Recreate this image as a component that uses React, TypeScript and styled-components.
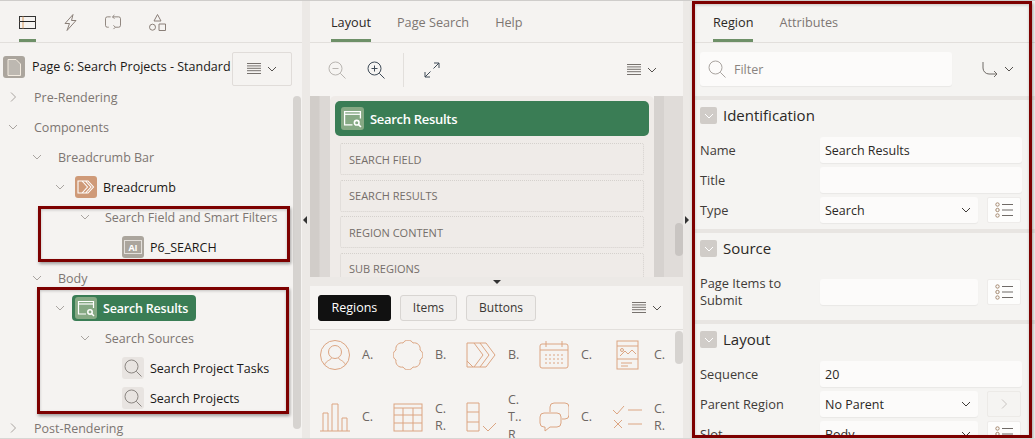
import React from "react";
import styled, { createGlobalStyle } from "styled-components";

const Global = createGlobalStyle`
  html, body { margin: 0; padding: 0; background: #fff; }
  * { box-sizing: border-box; }
`;

const Page = styled.div`
  position: relative;
  width: 1035px;
  height: 439px;
  overflow: hidden;
  display: flex;
  background: #ece9e6;
  border-top: 1px solid #cfcdcb;
  border-bottom: 1px solid #d8d6d4;
  font-family: "Open Sans", "Noto Sans", sans-serif;
  font-size: 12.5px;
  color: #1a1816;
`;
const LeftPanel = styled.section`
  position: relative;
  width: 302px;
  flex: none;
  background: #f5f3f1;
  display: flex;
  flex-direction: column;
  overflow: hidden;
`;
const CenterPanel = styled.section`
  position: relative;
  width: 373px;
  margin-left: 8px;
  flex: none;
  display: flex;
  flex-direction: column;
  overflow: hidden;
  background: #f5f3f1;
`;
const RightPanel = styled.section`
  width: 343px;
  margin-left: 9px;
  flex: none;
  background: #f5f4f2;
  overflow: hidden;
  display: flex;
  flex-direction: column;
`;
const TabBar = styled.div<{ $gap: number; $left: number }>`
  height: 42px;
  flex: none;
  display: flex;
  gap: ${(p) => p.$gap}px;
  padding-left: ${(p) => p.$left}px;
  border-bottom: 1px solid #e2dfdc;
`;
const Tab = styled.div<{ $active?: boolean }>`
  height: 41px;
  display: flex;
  align-items: center;
  padding-top: 4px;
  font-size: 12.7px;
  color: ${(p) => (p.$active ? "#2b2825" : "#7d7672")};
  border-bottom: 3px solid ${(p) => (p.$active ? "#6e9068" : "transparent")};
`;
const IconTab = styled(Tab)<{ $w: number }>`
  width: ${(p) => p.$w}px;
  justify-content: center;
`;
const TitleRow = styled.div`
  height: 37px;
  margin-top: 9px;
  flex: none;
  display: flex;
  align-items: flex-start;
  padding: 4px 10px 0 3px;
`;
const PageBadge = styled.span`
  width: 22px;
  height: 22px;
  flex: none;
  border-radius: 3px;
  background: #aba59d;
  margin-right: 7px;
  display: flex;
  align-items: center;
  justify-content: center;
`;
const TitleText = styled.span`
  flex: 1;
  min-width: 0;
  line-height: 22px;
  white-space: nowrap;
  overflow: hidden;
`;
const MenuBox = styled.div`
  width: 60px;
  height: 34px;
  flex: none;
  margin-top: -4px;
  border: 1px solid #e0dcd9;
  border-radius: 2px;
  display: flex;
  align-items: center;
  justify-content: center;
  gap: 5px;
`;
const Tree = styled.div`
  display: flex;
  flex-direction: column;
  margin-top: -7px;
`;
const Row = styled.div<{ $indent: number; $tall?: boolean }>`
  height: ${(p) => (p.$tall ? 31 : 30)}px;
  padding-bottom: ${(p) => (p.$tall ? 1 : 0)}px;
  display: flex;
  align-items: center;
  padding-left: ${(p) => p.$indent}px;
  white-space: nowrap;
`;
const Twisty = styled.span<{ $gap: number }>`
  width: 20px;
  flex: none;
  margin-right: ${(p) => p.$gap}px;
  display: flex;
  justify-content: center;
  color: #a5a09c;
`;
const Muted = styled.span`
  color: #7d7672;
`;
const NodeIcon = styled.span<{ $bg: string }>`
  width: 22px;
  height: 22px;
  flex: none;
  margin-right: 6px;
  border-radius: 3px;
  background: ${(p) => p.$bg};
  display: flex;
  align-items: center;
  justify-content: center;
`;
const Pill = styled.span`
  height: 26px;
  display: flex;
  align-items: center;
  padding: 0 8px 0 3px;
  border-radius: 4px;
  background: #3a7d55;
  color: #fff;
  font-weight: 600;
  letter-spacing: -0.2px;
`;
const Track = styled.div<{ $left: number; $top: number; $h: number; $c?: string }>`
  position: absolute;
  left: ${(p) => p.$left}px;
  top: ${(p) => p.$top}px;
  width: 8px;
  height: ${(p) => p.$h}px;
  border-radius: 4px;
  background: ${(p) => p.$c ?? "#d6d3d0"};
`;
const Toolbar = styled.div`
  height: 53px;
  flex: none;
  display: flex;
  align-items: center;
  padding: 0 25px 0 18px;
  background: #f6f4f2;
`;
const ToolIcon = styled.span<{ $mr: number }>`
  display: flex;
  margin-right: ${(p) => p.$mr}px;
`;
const ToolSep = styled.span`
  width: 1px;
  height: 34px;
  background: #e2dfdc;
  margin-right: 20px;
`;
const Grow = styled.span`
  flex: 1;
`;
const MenuGlyph = styled.span`
  display: flex;
  align-items: center;
  gap: 5px;
`;
const Canvas = styled.div`
  height: 181px;
  flex: none;
  overflow: hidden;
  padding: 0 29px 0 20px;
  background: linear-gradient(90deg, #d1cdc9 0, #d1cdc9 9px, #dcd8d5 10px, #dcd8d5 20px, transparent 20px),
    linear-gradient(90deg, transparent 344px, #d6d2cf 344px, #d6d2cf 354px, #e0dcd9 354px, #e0dcd9 373px);
`;
const Card = styled.div`
  height: 200px;
  background: #efebe8;
  border-radius: 5px 5px 0 0;
  padding: 5px;
  display: flex;
  flex-direction: column;
`;
const RegionHead = styled.div`
  height: 35px;
  flex: none;
  background: #3a7d55;
  border-radius: 5px;
  color: #fff;
  font-size: 13px;
  font-weight: 600;
  letter-spacing: -0.3px;
  display: flex;
  align-items: center;
  padding-left: 6px;
  margin-bottom: 7px;
`;
const RegionIcon = styled.span`
  width: 23px;
  height: 23px;
  margin-right: 6px;
  border-radius: 3px;
  background: #86a984;
  display: flex;
  align-items: center;
  justify-content: center;
`;
const Slot = styled.div`
  height: 32px;
  flex: none;
  margin: 0 5px 4.5px;
  border: 1px dotted #d5d1cd;
  border-radius: 2px;
  padding-left: 8px;
  display: flex;
  align-items: center;
  font-size: 11px;
  color: #756e6a;
`;
const SplitBar = styled.div`
  height: 9px;
  flex: none;
  background: #ece9e6;
  display: flex;
  justify-content: center;
  align-items: center;
`;
const GalleryBar = styled.div`
  height: 44px;
  flex: none;
  display: flex;
  align-items: center;
  padding: 0 20px 0 8px;
  gap: 9px;
  border-bottom: 1px solid #e2dfdc;
  background: #f6f4f2;
`;
const GalleryButton = styled.span<{ $on?: boolean }>`
  height: 26px;
  padding: 0 ${(p) => (p.$on ? 12.5 : 12)}px;
  display: flex;
  align-items: center;
  border-radius: 3px;
  font-size: ${(p) => (p.$on ? 12.5 : 12)}px;
  border: 1px solid ${(p) => (p.$on ? "#111" : "#d8d5d2")};
  background: ${(p) => (p.$on ? "#111" : "#f1efed")};
  color: ${(p) => (p.$on ? "#fff" : "#3a3633")};
`;
const Gallery = styled.div`
  display: grid;
  grid-template-columns: repeat(5, 73px);
  grid-auto-rows: 62px;
  padding: 1px 0 0 10px;
`;
const GalleryItem = styled.div`
  display: flex;
  align-items: center;
  gap: 12px;
  height: 48px;
  color: #6d6763;
  font-size: 12.5px;
  line-height: 17.5px;
`;
const Lines = styled.span`
  display: flex;
  flex-direction: column;
  white-space: nowrap;
`;
const SearchRow = styled.div`
  height: 53px;
  flex: none;
  display: flex;
  align-items: center;
  padding: 0 20px 1px 8px;
`;
const FilterBox = styled.div`
  width: 252px;
  height: 34px;
  border-radius: 3px;
  background: #fcfbfa;
  box-shadow: 0 1px 1px rgba(0, 0, 0, 0.05);
  display: flex;
  align-items: center;
  gap: 8px;
  padding-left: 8px;
  color: #8a8480;
`;
const SectionRule = styled.div<{ $mt: number }>`
  height: 4px;
  flex: none;
  margin-top: ${(p) => p.$mt}px;
  background: #e8e5e2;
`;
const SectionHead = styled.div<{ $mb: number }>`
  height: 17px;
  flex: none;
  margin: 7px 0 ${(p) => p.$mb}px 8px;
  display: flex;
  align-items: center;
  gap: 6px;
  font-size: 15px;
  color: #2b2825;
`;
const SectionTitle = styled.span`
  margin-bottom: 2px;
`;
const Collapse = styled.span`
  width: 17px;
  height: 17px;
  border-radius: 2px;
  background: #d0ccc8;
  display: flex;
  align-items: center;
  justify-content: center;
`;
const FieldRow = styled.div`
  height: 26px;
  flex: none;
  margin-bottom: 4px;
  display: flex;
  align-items: center;
  padding-left: 8px;
`;
const FieldLabel = styled.label`
  width: 120px;
  flex: none;
  color: #3f3b38;
  font-size: 12.8px;
  line-height: 17px;
`;
const Input = styled.div<{ $w: number }>`
  width: ${(p) => p.$w}px;
  height: 26px;
  flex: none;
  border-radius: 3px;
  background: #fcfbfa;
  box-shadow: 0 1px 1px rgba(0, 0, 0, 0.05);
  padding: 0 6px 0 5px;
  display: flex;
  align-items: center;
  justify-content: space-between;
  color: #2b2825;
`;
const SideBtn = styled.span<{ $off?: boolean }>`
  width: 34px;
  height: 26px;
  margin-left: 9px;
  flex: none;
  border-radius: 2px;
  background: ${(p) => (p.$off ? "#f5f4f2" : "#fdfdfc")};
  border: 1px solid ${(p) => (p.$off ? "#eceae7" : "#eeecea")};
  display: flex;
  align-items: center;
  justify-content: center;
`;
const Mark = styled.div<{ $x: number; $y: number; $w: number; $h: number }>`
  position: absolute;
  left: ${(p) => p.$x}px;
  top: ${(p) => p.$y}px;
  width: ${(p) => p.$w}px;
  height: ${(p) => p.$h}px;
  border: 3px solid #7d0000;
  box-shadow: 1px 2px 3px rgba(0, 0, 0, 0.35), inset 0 1px 3px rgba(0, 0, 0, 0.2);
  pointer-events: none;
`;
const Arrow = styled.span<{ $x: number; $y: number; $dir: "l" | "r" }>`
  position: absolute;
  left: ${(p) => p.$x}px;
  top: ${(p) => p.$y}px;
  width: 0;
  height: 0;
  border-top: 4px solid transparent;
  border-bottom: 4px solid transparent;
  ${(p) => (p.$dir === "l" ? "border-right: 4px solid #333;" : "border-left: 4px solid #333;")}
`;
const DownTri = styled.span`
  width: 0;
  height: 0;
  border-left: 4px solid transparent;
  border-right: 4px solid transparent;
  border-top: 4px solid #333;
`;

const Down = ({ c = "#a9a4a0", s = 12 }: { c?: string; s?: number }) => (
  <svg width={s} height={s} viewBox="0 0 12 12" fill="none" stroke={c}><path d="M2 4l4 4 4-4" /></svg>
);
const Right = ({ c = "#a9a4a0" }: { c?: string }) => (
  <svg width="12" height="12" viewBox="0 0 12 12" fill="none" stroke={c}><path d="M4 1.5l4.5 4.5L4 10.5" /></svg>
);
const Menu = () => (
  <MenuGlyph>
    <svg width="14" height="12" viewBox="0 0 14 12" fill="none" stroke="#77726e">
      <path d="M0 .5h14M0 2.900h14M0 5.300h14M0 7.700h14M0 10.500h14" />
    </svg>
    <Down c="#55514e" />
  </MenuGlyph>
);
const Mag = ({ c = "#8b8682", s = 18, sign }: { c?: string; s?: number; sign?: "+" | "-" }) => (
  <svg width={s} height={s} viewBox="0 0 18 18" fill="none" stroke={c}>
    <circle cx="7.5" cy="7.5" r="6.5" />
    <path d="M12.3 12.3L17.5 17.5" />
    {sign && <path d="M4.5 7.5h6" />}
    {sign === "+" && <path d="M7.5 4.5v6" />}
  </svg>
);
const RegionGlyph = ({ s = 18 }: { s?: number }) => (
  <svg width={s} height={s} viewBox="0 0 18 18" fill="none" stroke="#fff" strokeWidth="1.2">
    <path d="M9 15H1.5V2.5h15V9" />
    <path d="M1.5 5h15" />
    <circle cx="13" cy="13" r="2.2" strokeWidth="1.5" />
    <path d="M14.8 14.8L17 17" strokeWidth="1.5" />
  </svg>
);
const ListIcon = () => (
  <svg width="18" height="16" viewBox="0 0 18 16" fill="none" stroke="#6f6a66">
    <circle cx="2.5" cy="2.5" r="1.7" stroke="#a58a70" />
    <circle cx="2.5" cy="8" r="1.7" stroke="#a58a70" />
    <circle cx="2.5" cy="13.5" r="1.7" stroke="#a58a70" />
    <path d="M7 2.5h11M7 8h11M7 13.5h11" />
  </svg>
);
const P = "#dca582";
const Art = ({ children }: { children: React.ReactNode }) => (
  <svg width={30} height={30} viewBox="0 0 30 30" fill="none" stroke={P} style={{ flex: "none" }}>
    {children}
  </svg>
);

const Tasks = [
  { id: "a", label: ["A."], art: <><circle cx="15" cy="15" r="14.5" /><circle cx="15" cy="12" r="6.5" /><path d="M4.5 25c2-5 6-4.500 7-7M25.500 25c-2-5-6-4.500-7-7" /></> },
  { id: "b", label: ["B."], art: <path d="M20 3A5.800 5.800 0 0 1 27 10A5.800 5.800 0 0 1 27 20A5.800 5.800 0 0 1 20 27A5.800 5.800 0 0 1 10 27A5.800 5.800 0 0 1 3 20A5.800 5.800 0 0 1 3 10A5.800 5.800 0 0 1 10 3A5.800 5.800 0 0 1 20 3z" /> },
  { id: "c", label: ["B."], art: <path d="M1 3h19l9 12-9 12H1zM8 3l9 12-9 12M14 3l9 12-9 12M1 21l6 6" /> },
  { id: "d", label: ["C."], art: <><rect x="1" y="4" width="28" height="24" rx="2" /><path d="M1 10h28M7 1v6M23 1v6" /><path d="M6 15h18M6 19h18M6 23h18" strokeDasharray="2 2" /></> },
  { id: "e", label: ["C."], art: <><rect x="5" y="1" width="21" height="28" /><path d="M5 6h21M5 19h21M9 23h11M9 26h7M8 16l5-5 3 3 4-4 4 4" /><circle cx="10" cy="10" r="1.500" /></> },
  { id: "f", label: ["C."], art: <path d="M0 29h30M3 29V11h5v18M12 29V2h6v27M22 29V16h5v13" /> },
  { id: "g", label: ["C.", "R."], art: <><rect x="1" y="2" width="28" height="27" /><path d="M1 6h28M1 13h28M1 21h28M10 6v23M20 6v23" /></> },
  { id: "h", label: ["C.", "T..", "R"], art: <path d="M1 1h12v28H1zM1 10h12M1 20h12M17 24l5 5 8-8" /> },
  { id: "i", label: ["C."], art: <path d="M11 10V5a4 4 0 0 1 4-4h11a4 4 0 0 1 4 4v8a4 4 0 0 1-4 4h-3M5 11h13a4 4 0 0 1 4 4v6a4 4 0 0 1-4 4H11l-5 4v-4H5a4 4 0 0 1-4-4v-6a4 4 0 0 1 4-4z" /> },
  { id: "j", label: ["C.", "R."], art: <path d="M1 8l4 4 7-8M16 8h14M2 18l8 8M10 18l-8 8M16 22h14" /> },
];

export default function App() {
  return (
    <Page>
      <Global />
      <LeftPanel>
        <TabBar $gap={28} $left={19}>
          <IconTab $active $w={17}>
            <svg width="17" height="13" viewBox="0 0 17 13" fill="none" stroke="#222">
              <rect x=".5" y=".5" width="16" height="12" stroke="#333" />
              <path d="M.5 5.500h16M4 .5v12" stroke="#d99b5f" />
              <path d="M.5 5.500h16" />
            </svg>
          </IconTab>
          <IconTab $w={13}>
            <svg width="13" height="17" viewBox="0 0 13 17" fill="none" stroke="#8a7f78"><path d="M9 .5L1 9.500h4.500L3 16.500l9-10H7.500z" /></svg>
          </IconTab>
          <IconTab $w={16}>
            <svg width="17" height="17" viewBox="0 0 17 17" fill="none" stroke="#8a7f78"><path d="M6 2.500H2.500a2 2 0 0 0-2 2v7a2 2 0 0 0 2 2H4M11 13.500h3.500a2 2 0 0 0 2-2v-7a2 2 0 0 0-2-2H8M10 .5L8 2.500l2 2M9 11.500l2 2-2 2" /></svg>
          </IconTab>
          <IconTab $w={17}>
            <svg width="17" height="17" viewBox="0 0 17 17" fill="none" stroke="#8a7f78"><path d="M8.500.5L12 7H5zM10 10h6.500v6.500H10z" /><circle cx="3.500" cy="13.200" r="3" /></svg>
          </IconTab>
        </TabBar>
        <TitleRow>
          <PageBadge>
            <svg width="14" height="17" viewBox="0 0 14 17" fill="#bdb8b1" stroke="#f3ebe0"><path d="M1 .5h8l4.500 4.500v11.500H1z" /></svg>
          </PageBadge>
          <TitleText>Page 6: Search Projects - Standard</TitleText>
          <MenuBox><Menu /></MenuBox>
        </TitleRow>
        <Tree>
          <Row $indent={3}><Twisty $gap={11}><Right /></Twisty><Muted>Pre-Rendering</Muted></Row>
          <Row $indent={3}><Twisty $gap={11}><Down /></Twisty><Muted>Components</Muted></Row>
          <Row $indent={27}><Twisty $gap={11}><Down /></Twisty><Muted>Breadcrumb Bar</Muted></Row>
          <Row $indent={50}>
            <Twisty $gap={5}><Down /></Twisty>
            <NodeIcon $bg="#cf9a78">
              <svg width="18" height="14" viewBox="0 0 18 14" fill="none" stroke="#fff" strokeWidth="1.1"><path d="M1 1h10l5.500 6L11 13H1zM5 1l5.500 6L5 13M8.500 1L14 7l-5.500 6" /></svg>
            </NodeIcon>
            <span>Breadcrumb</span>
          </Row>
          <Row $indent={75}><Twisty $gap={10}><Down /></Twisty><Muted>Search Field and Smart Filters</Muted></Row>
          <Row $indent={122} $tall>
            <NodeIcon $bg="#aba59d">
              <svg width="18" height="14" viewBox="0 0 18 14">
                <rect x=".5" y=".5" width="17" height="13" fill="none" stroke="#e4e0dc" />
                <text x="9" y="10.500" textAnchor="middle" fontSize="9" fontWeight="700" fontFamily="Open Sans, sans-serif" fill="#fff">AI</text>
              </svg>
            </NodeIcon>
            <span>P6_SEARCH</span>
          </Row>
          <Row $indent={27}><Twisty $gap={11}><Down /></Twisty><Muted>Body</Muted></Row>
          <Row $indent={50}>
            <Twisty $gap={2}><Down /></Twisty>
            <Pill><NodeIcon $bg="#86a984"><RegionGlyph /></NodeIcon>Search Results</Pill>
          </Row>
          <Row $indent={75}><Twisty $gap={10}><Down /></Twisty><Muted>Search Sources</Muted></Row>
          <Row $indent={122}><NodeIcon $bg="#e8e4e1"><Mag /></NodeIcon><span>Search Project Tasks</span></Row>
          <Row $indent={122}><NodeIcon $bg="#e8e4e1"><Mag /></NodeIcon><span>Search Projects</span></Row>
          <Row $indent={3}><Twisty $gap={11}><Right /></Twisty><Muted>Post-Rendering</Muted></Row>
        </Tree>
        <Track $left={293} $top={95} $h={333} />
      </LeftPanel>

      <CenterPanel>
        <TabBar $gap={26} $left={21}>
          <Tab $active>Layout</Tab>
          <Tab>Page Search</Tab>
          <Tab>Help</Tab>
        </TabBar>
        <Toolbar>
          <ToolIcon $mr={21}><Mag c="#b9b5b1" sign="-" /></ToolIcon>
          <ToolIcon $mr={18}><Mag c="#3e4a57" sign="+" /></ToolIcon>
          <ToolSep />
          <ToolIcon $mr={0}>
            <svg width="16" height="16" viewBox="0 0 16 16" fill="none" stroke="#3e4a57"><path d="M1 15L6.500 9.500M9.500 6.500L15 1M10 1h5v5M1 10v5h5" /></svg>
          </ToolIcon>
          <Grow />
          <Menu />
        </Toolbar>
        <Canvas>
          <Card>
            <RegionHead><RegionIcon><RegionGlyph s={19} /></RegionIcon>Search Results</RegionHead>
            <Slot>SEARCH FIELD</Slot>
            <Slot>SEARCH RESULTS</Slot>
            <Slot>REGION CONTENT</Slot>
            <Slot>SUB REGIONS</Slot>
          </Card>
        </Canvas>
        <SplitBar><DownTri /></SplitBar>
        <GalleryBar>
          <GalleryButton $on>Regions</GalleryButton>
          <GalleryButton>Items</GalleryButton>
          <GalleryButton>Buttons</GalleryButton>
          <Grow />
          <Menu />
        </GalleryBar>
        <Gallery>
          {Tasks.map((t) => (
            <GalleryItem key={t.id}>
              <Art>{t.art}</Art>
              <Lines>{t.label.map((l) => <span key={l}>{l}</span>)}</Lines>
            </GalleryItem>
          ))}
        </Gallery>
        <Track $left={365} $top={222} $h={33} $c="#c9c5c2" />
        <Track $left={365} $top={330} $h={33} />
      </CenterPanel>

      <RightPanel>
        <TabBar $gap={26} $left={21}>
          <Tab $active>Region</Tab>
          <Tab>Attributes</Tab>
        </TabBar>
        <SearchRow>
          <FilterBox><Mag c="#a9a4a0" />Filter</FilterBox>
          <Grow />
          <MenuGlyph>
            <svg width="16" height="16" viewBox="0 0 16 16" fill="none" stroke="#6f6a66"><path d="M1 1v6a6 6 0 0 0 6 6h8M12 10l3 3-3 3" /></svg>
            <Down c="#55514e" />
          </MenuGlyph>
        </SearchRow>
        <SectionRule $mt={0} />
        <SectionHead $mb={13}><Collapse><Down c="#fff" /></Collapse><SectionTitle>Identification</SectionTitle></SectionHead>
        <FieldRow><FieldLabel>Name</FieldLabel><Input $w={202}>Search Results</Input></FieldRow>
        <FieldRow><FieldLabel>Title</FieldLabel><Input $w={202} /></FieldRow>
        <FieldRow>
          <FieldLabel>Type</FieldLabel>
          <Input $w={158}>Search<Down c="#3f3b38" /></Input>
          <SideBtn><ListIcon /></SideBtn>
        </FieldRow>
        <SectionRule $mt={2} />
        <SectionHead $mb={22}><Collapse><Down c="#fff" /></Collapse><SectionTitle>Source</SectionTitle></SectionHead>
        <FieldRow>
          <FieldLabel>Page Items to<br />Submit</FieldLabel>
          <Input $w={158} />
          <SideBtn><ListIcon /></SideBtn>
        </FieldRow>
        <SectionRule $mt={11} />
        <SectionHead $mb={13}><Collapse><Down c="#fff" /></Collapse><SectionTitle>Layout</SectionTitle></SectionHead>
        <FieldRow><FieldLabel>Sequence</FieldLabel><Input $w={202}>20</Input></FieldRow>
        <FieldRow>
          <FieldLabel>Parent Region</FieldLabel>
          <Input $w={158}>No Parent<Down c="#3f3b38" /></Input>
          <SideBtn $off><Right c="#c9c5c2" /></SideBtn>
        </FieldRow>
        <FieldRow>
          <FieldLabel>Slot</FieldLabel>
          <Input $w={158}>Body<Down c="#3f3b38" /></Input>
          <SideBtn><ListIcon /></SideBtn>
        </FieldRow>
      </RightPanel>

      <Mark $x={38} $y={205} $w={252} $h={56} />
      <Mark $x={37} $y={286} $w={252} $h={127} />
      <Mark $x={692} $y={0} $w={340} $h={437} />
      <Arrow $x={303} $y={215} $dir="l" />
      <Arrow $x={685} $y={215} $dir="r" />
    </Page>
  );
}
